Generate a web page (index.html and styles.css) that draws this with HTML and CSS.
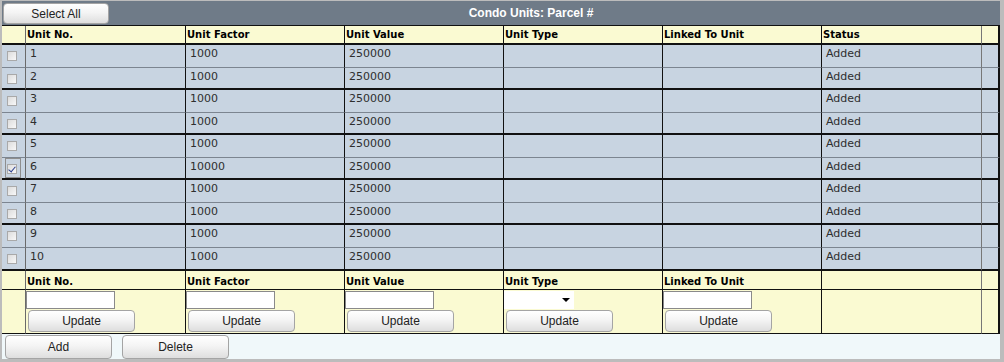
FILE: index.html
```html
<!DOCTYPE html>
<html>
<head>
<meta http-equiv="Content-Type" content="text/html; charset=UTF-8"/>
<title>Condo Units</title>
<link rel="stylesheet" href="styles.css">
</head>
<body>
<div class="frame">
	<div class="topbar">
		<button class="btn btn-select">Select All</button>
		<div class="title">Condo Units: Parcel #</div>
	</div>
	<table class="grid">
		<thead>
			<tr class="head">
				<th class="c-check"></th>
				<th class="c-wide">Unit No.</th>
				<th class="c-col">Unit Factor</th>
				<th class="c-col">Unit Value</th>
				<th class="c-col">Unit Type</th>
				<th class="c-col">Linked To Unit</th>
				<th class="c-wide c-status">Status</th>
				<th class="c-end"></th>
			</tr>
		</thead>
		<tbody>
			<tr class="odd"><td class="check"><span class="check-wrap"><input type="checkbox"></span></td><td>1</td><td>1000</td><td>250000</td><td></td><td></td><td class="c-status">Added</td><td></td></tr>
			<tr class="even"><td class="check"><span class="check-wrap"><input type="checkbox"></span></td><td>2</td><td>1000</td><td>250000</td><td></td><td></td><td class="c-status">Added</td><td></td></tr>
			<tr class="odd"><td class="check"><span class="check-wrap"><input type="checkbox"></span></td><td>3</td><td>1000</td><td>250000</td><td></td><td></td><td class="c-status">Added</td><td></td></tr>
			<tr class="even"><td class="check"><span class="check-wrap"><input type="checkbox"></span></td><td>4</td><td>1000</td><td>250000</td><td></td><td></td><td class="c-status">Added</td><td></td></tr>
			<tr class="odd"><td class="check"><span class="check-wrap"><input type="checkbox"></span></td><td>5</td><td>1000</td><td>250000</td><td></td><td></td><td class="c-status">Added</td><td></td></tr>
			<tr class="even"><td class="check"><span class="check-wrap focus"><input type="checkbox" checked></span></td><td>6</td><td>10000</td><td>250000</td><td></td><td></td><td class="c-status">Added</td><td></td></tr>
			<tr class="odd"><td class="check"><span class="check-wrap"><input type="checkbox"></span></td><td>7</td><td>1000</td><td>250000</td><td></td><td></td><td class="c-status">Added</td><td></td></tr>
			<tr class="even"><td class="check"><span class="check-wrap"><input type="checkbox"></span></td><td>8</td><td>1000</td><td>250000</td><td></td><td></td><td class="c-status">Added</td><td></td></tr>
			<tr class="odd"><td class="check"><span class="check-wrap"><input type="checkbox"></span></td><td>9</td><td>1000</td><td>250000</td><td></td><td></td><td class="c-status">Added</td><td></td></tr>
			<tr class="even"><td class="check"><span class="check-wrap"><input type="checkbox"></span></td><td>10</td><td>1000</td><td>250000</td><td></td><td></td><td class="c-status">Added</td><td></td></tr>
		</tbody>
		<tfoot>
			<tr class="foot-head">
				<th></th>
				<th>Unit No.</th>
				<th>Unit Factor</th>
				<th>Unit Value</th>
				<th>Unit Type</th>
				<th>Linked To Unit</th>
				<th class="c-status"></th>
				<th></th>
			</tr>
			<tr class="edit">
				<td></td>
				<td><input class="field" type="text"><button class="btn btn-update">Update</button></td>
				<td><input class="field" type="text"><button class="btn btn-update">Update</button></td>
				<td><input class="field" type="text"><button class="btn btn-update">Update</button></td>
				<td><span class="select-box"><select class="type-select"><option></option></select></span><button class="btn btn-update">Update</button></td>
				<td><input class="field" type="text"><button class="btn btn-update">Update</button></td>
				<td class="c-status"></td>
				<td></td>
			</tr>
		</tfoot>
	</table>
	<div class="actions">
		<button class="btn btn-action">Add</button>
		<button class="btn btn-action">Delete</button>
	</div>
</div>
</body>
</html>
```

FILE: styles.css
```css
body {
	margin: 0px;
	padding: 0px;
	background: #bdbdbd;
}

.frame {
	box-sizing: border-box;
	width: 1004px;
	height: 362px;
	border-style: solid;
	border-color: #bcbcbc;
	border-width: 1px 4px 3px 2px;
	background: #f0f8fa;
	overflow: hidden;
}

.topbar {
	display: flex;
	height: 24px;
	background: #6f7b88;
}

.title {
	flex: 1;
	text-align: center;
	padding-right: 47px;
	color: #ffffff;
	font-family: "Liberation Sans", Arial, sans-serif;
	font-weight: bold;
	font-size: 12px;
	line-height: 24px;
}

.btn {
	box-sizing: border-box;
	display: block;
	padding: 0px;
	border: 1px solid #a4a4a4;
	border-radius: 4px;
	background: linear-gradient(#ffffff, #f4f4f4 45%, #dedede);
	font-family: "Liberation Sans", Arial, sans-serif;
	font-size: 12px;
	color: #222222;
}

.btn-select {
	width: 106px;
	height: 21px;
	margin: 2px 0px 0px 1px;
}

.grid {
	width: 998px;
	table-layout: fixed;
	border-collapse: separate;
	border-spacing: 0px;
	border-top: 1px solid #111111;
	font-family: "DejaVu Sans", Verdana, sans-serif;
}

.grid th,
.grid td {
	box-sizing: border-box;
	padding: 0px;
	border-right: 1px solid #111111;
	text-align: left;
	vertical-align: top;
	overflow: hidden;
	white-space: nowrap;
}

.grid th:first-child,
.grid td:first-child {
	border-right-color: #6a6a6a;
}

.grid .c-status {
	border-right-color: #777777;
}

.grid th:last-child,
.grid td:last-child {
	border-right: 2px solid #111111;
}

.c-check { width: 24px; }
.c-wide { width: 160px; }
.c-col { width: 159px; }
.c-end { width: 18px; }

.grid .head th,
.grid .foot-head th {
	background: #fafad2;
	color: #000000;
	font-size: 10px;
	font-weight: bold;
	padding-left: 1px;
	vertical-align: middle;
}

.grid .head th {
	height: 19px;
	border-bottom: 2px solid #111111;
}

.grid .foot-head th {
	height: 19px;
	padding-top: 2px;
	border-bottom: 1px solid #111111;
}

.grid tbody td {
	background: #c8d4e1;
	color: #2e2e2e;
	font-size: 11px;
	line-height: 13px;
	padding: 2px 0px 0px 4px;
}

.grid tbody tr.odd td {
	height: 23px;
	border-bottom: 1px solid #7c8590;
}

.grid tbody tr.even td {
	height: 22px;
	border-bottom: 2px solid #111111;
}

.grid tbody tr:last-child td {
	height: 23px;
}

.grid tbody td.check {
	padding: 0px;
}

.check-wrap {
	box-sizing: border-box;
	display: flex;
	align-items: flex-end;
	width: 16px;
	height: 20px;
	margin-left: 3px;
	padding: 0px 0px 3px 1px;
	border: 1px solid transparent;
}

.check-wrap.focus {
	border-color: #8e8e8e;
}

.check-wrap input {
	-webkit-appearance: none;
	appearance: none;
	position: relative;
	box-sizing: border-box;
	width: 10px;
	height: 10px;
	margin: 0px;
	border: 1px solid #a9a9a9;
	background: linear-gradient(135deg, #dcdcdc, #f8f8f8);
}

.check-wrap input:checked::after {
	content: "";
	position: absolute;
	left: 2px;
	top: 0px;
	width: 3px;
	height: 6px;
	border: solid #2a3f8f;
	border-width: 0px 1px 1px 0px;
	transform: rotate(40deg);
}

.grid .edit td {
	height: 44px;
	background: #fafad2;
	border-bottom: 1px solid #111111;
	padding-top: 1px;
}

.field {
	box-sizing: border-box;
	display: block;
	width: 89px;
	height: 18px;
	margin: 0px;
	padding: 0px 2px;
	border: 1px solid #8a8a8a;
	background: #ffffff;
}

.select-box {
	position: relative;
	display: block;
	width: 70px;
	height: 18px;
	background: #ffffff;
}

.select-box:after {
	content: "";
	position: absolute;
	left: 58px;
	top: 7px;
	border-style: solid;
	border-width: 4px 4px 0px 4px;
	border-color: #000000 transparent transparent transparent;
}

.type-select {
	-webkit-appearance: none;
	appearance: none;
	display: block;
	width: 70px;
	height: 18px;
	border: none;
	background: transparent;
}

.btn-update {
	width: 107px;
	height: 22px;
	margin: 1px 0px 0px 2px;
}

.actions {
	display: flex;
	gap: 10px;
	height: 26px;
	padding: 1px 0px 0px 3px;
	box-sizing: border-box;
	background: #f0f8fa;
}

.btn-action {
	width: 107px;
	height: 24px;
}
```
